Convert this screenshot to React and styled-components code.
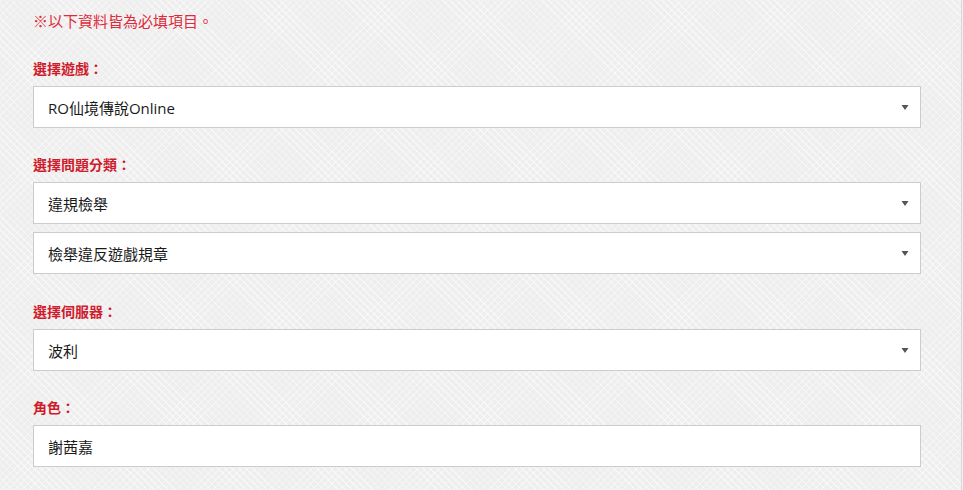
import React from "react";
import styled, { createGlobalStyle } from "styled-components";

const Global = createGlobalStyle`
  html, body { margin: 0; padding: 0; }
  body {
    font-family: "Open Sans", "Noto Sans CJK TC", sans-serif;
    background: #f0f0f0;
  }
`;

const Page = styled.div`
  box-sizing: border-box;
  width: 962px;
  min-height: 100vh;
  padding: 11px 40px 20px 33px;
  border-right: 1px solid #d9d9d9;
  background-color: #eeeeee;
  background-image: repeating-linear-gradient(
      45deg,
      rgba(255, 255, 255, 0.5) 0 1px,
      transparent 1px 5px
    ),
    repeating-linear-gradient(
      -45deg,
      rgba(255, 255, 255, 0.35) 0 1px,
      transparent 1px 5px
    );
`;

const Notice = styled.div`
  font-family: "Noto Sans CJK TC", sans-serif;
  font-size: 15px;
  line-height: 20px;
  color: #df2a3a;
  margin-bottom: 27px;
`;

const Section = styled.div`
  margin-bottom: ${(p) => p.$space || 26}px;
`;

const Label = styled.div`
  font-family: "Noto Sans CJK TC", sans-serif;
  font-size: 14px;
  font-weight: 700;
  line-height: 20px;
  color: #cf1b2b;
  margin-bottom: 8px;
`;

const Stack = styled.div`
  display: flex;
  flex-direction: column;
  gap: 8px;
`;

const Field = styled.div`
  box-sizing: border-box;
  width: 888px;
  height: 42px;
  background: #fff;
  border: 1px solid #cccccc;
  display: flex;
  align-items: center;
  justify-content: space-between;
  padding: 0 11px 0 14px;
  font-family: "Open Sans", "Noto Sans CJK TC", sans-serif;
  font-size: 15px;
  color: #1a1a1a;
`;

const Arrow = () => (
  <svg width="8" height="5" viewBox="0 0 8 5">
    <path d="M0.5 0 H7.5 L4 5 Z" fill="#555" />
  </svg>
);

const Select = ({ value }) => (
  <Field>
    <span>{value}</span>
    <Arrow />
  </Field>
);

export default function App() {
  return (
    <>
      <Global />
      <Page>
        <Notice>※以下資料皆為必填項目。</Notice>
        <Section>
          <Label>選擇遊戲：</Label>
          <Stack>
            <Select value="RO仙境傳說Online" />
          </Stack>
        </Section>
        <Section $space={27}>
          <Label>選擇問題分類：</Label>
          <Stack>
            <Select value="違規檢舉" />
            <Select value="檢舉違反遊戲規章" />
          </Stack>
        </Section>
        <Section>
          <Label>選擇伺服器：</Label>
          <Stack>
            <Select value="波利" />
          </Stack>
        </Section>
        <Section>
          <Label>角色：</Label>
          <Stack>
            <Field>
              <span>謝茜嘉</span>
            </Field>
          </Stack>
        </Section>
      </Page>
    </>
  );
}
